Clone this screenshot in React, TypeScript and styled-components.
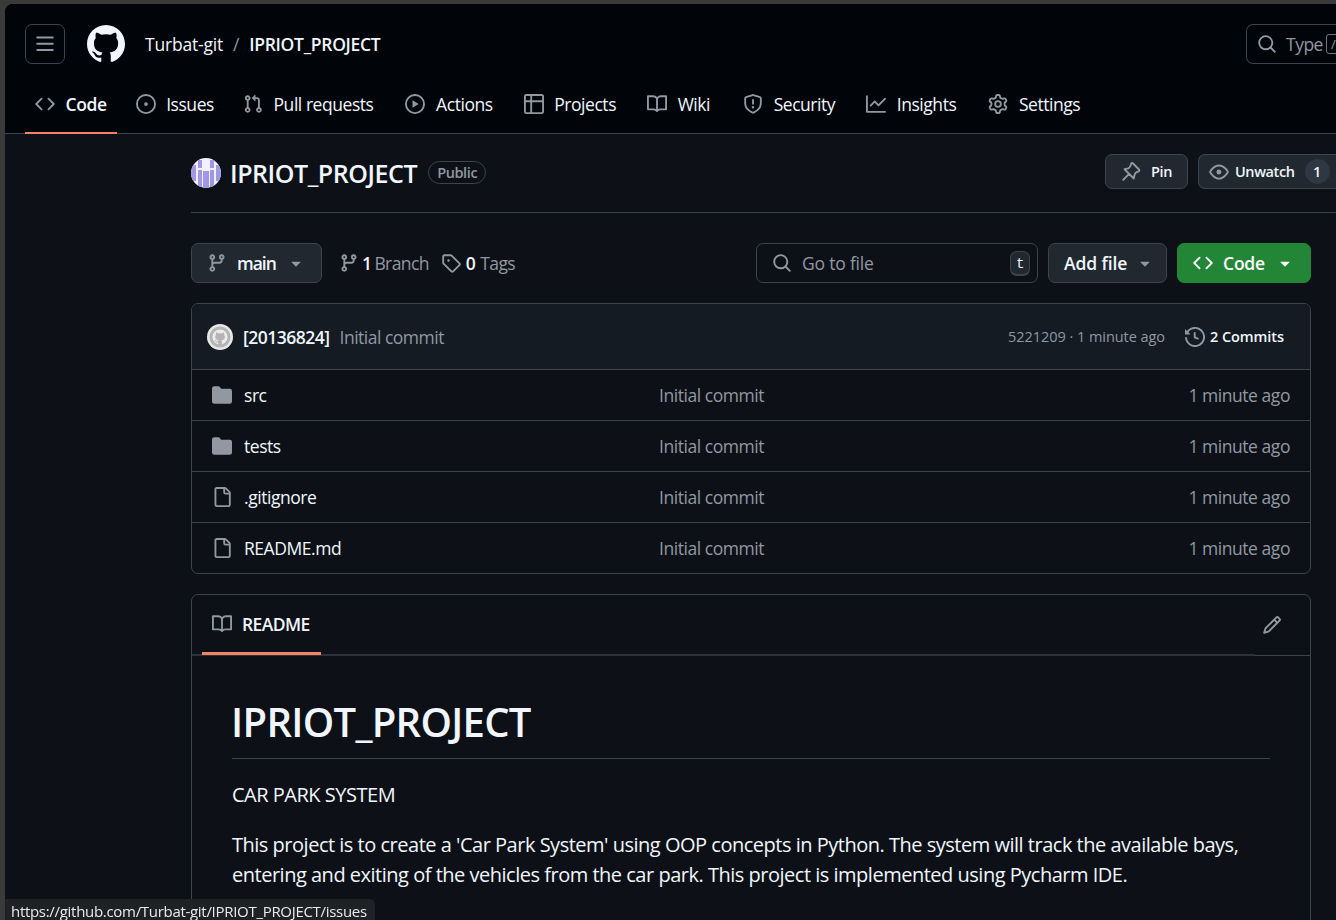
import React from "react";
import styled, { createGlobalStyle } from "styled-components";

const ICONS = {
  mark: "M8 0c4.42 0 8 3.58 8 8a8.013 8.013 0 0 1-5.45 7.59c-.4.08-.55-.17-.55-.38 0-.27.01-1.13.01-2.2 0-.75-.25-1.23-.54-1.48 1.78-.2 3.65-.88 3.65-3.95 0-.88-.31-1.59-.82-2.15.08-.2.36-1.02-.08-2.12 0 0-.67-.22-2.2.82-.64-.18-1.32-.27-2-.27-.68 0-1.36.09-2 .27-1.53-1.03-2.2-.82-2.2-.82-.44 1.1-.16 1.92-.08 2.12-.51.56-.82 1.28-.82 2.15 0 3.06 1.86 3.75 3.64 3.95-.23.2-.44.55-.51 1.07-.46.21-1.61.55-2.33-.66-.15-.24-.6-.83-1.23-.82-.67.01-.27.38.01.53.34.19.73.9.82 1.13.16.45.68 1.31 2.69.94 0 .67.01 1.3.01 1.49 0 .21-.15.45-.55.38A7.995 7.995 0 0 1 0 8c0-4.42 3.58-8 8-8Z",
  bars: "M1 2.75A.75.75 0 0 1 1.75 2h12.5a.75.75 0 0 1 0 1.5H1.75A.75.75 0 0 1 1 2.75Zm0 5A.75.75 0 0 1 1.75 7h12.5a.75.75 0 0 1 0 1.5H1.75A.75.75 0 0 1 1 7.75ZM1.75 12h12.5a.75.75 0 0 1 0 1.5H1.75a.75.75 0 0 1 0-1.5Z",
  code: "m11.28 3.22 4.25 4.25a.75.75 0 0 1 0 1.06l-4.25 4.25a.749.749 0 0 1-1.275-.326.749.749 0 0 1 .215-.734L13.94 8l-3.72-3.72a.749.749 0 0 1 .326-1.275.749.749 0 0 1 .734.215Zm-6.56 0a.751.751 0 0 1 1.042.018.751.751 0 0 1 .018 1.042L2.06 8l3.72 3.72a.749.749 0 0 1-.326 1.275.749.749 0 0 1-.734-.215L.47 8.53a.75.75 0 0 1 0-1.06Z",
  issue: "M8 9.5a1.5 1.5 0 1 0 0-3 1.5 1.5 0 0 0 0 3ZM8 0a8 8 0 1 1 0 16A8 8 0 0 1 8 0ZM1.5 8a6.5 6.5 0 1 0 13 0 6.5 6.5 0 0 0-13 0Z",
  pull: "M1.5 3.25a2.25 2.25 0 1 1 3 2.122v5.256a2.251 2.251 0 1 1-1.5 0V5.372A2.25 2.25 0 0 1 1.5 3.25Zm5.677-.177L9.573.677A.25.25 0 0 1 10 .854V2.5h1A2.5 2.5 0 0 1 13.5 5v5.628a2.251 2.251 0 1 1-1.5 0V5a1 1 0 0 0-1-1h-1v1.646a.25.25 0 0 1-.427.177L7.177 3.427a.25.25 0 0 1 0-.354ZM3.75 2.5a.75.75 0 1 0 0 1.5.75.75 0 0 0 0-1.5Zm0 9.5a.75.75 0 1 0 0 1.5.75.75 0 0 0 0-1.5Zm8.25.75a.75.75 0 1 0 1.5 0 .75.75 0 0 0-1.5 0Z",
  play: "M8 0a8 8 0 1 1 0 16A8 8 0 0 1 8 0ZM1.5 8a6.5 6.5 0 1 0 13 0 6.5 6.5 0 0 0-13 0Zm4.879-2.773 4.264 2.559a.25.25 0 0 1 0 .428l-4.264 2.559A.25.25 0 0 1 6 10.559V5.442a.25.25 0 0 1 .379-.215Z",
  table: "M0 1.75C0 .784.784 0 1.75 0h12.5C15.216 0 16 .784 16 1.75v12.5A1.75 1.75 0 0 1 14.25 16H1.75A1.75 1.75 0 0 1 0 14.25ZM6.5 6.5v8h7.75a.25.25 0 0 0 .25-.25V6.5Zm8-1.5V1.75a.25.25 0 0 0-.25-.25H6.5V5Zm-13 1.5v7.75c0 .138.112.25.25.25H5v-8ZM5 5V1.5H1.75a.25.25 0 0 0-.25.25V5Z",
  book: "M0 1.75A.75.75 0 0 1 .75 1h4.253c1.227 0 2.317.59 3 1.501A3.743 3.743 0 0 1 11.006 1h4.245a.75.75 0 0 1 .75.75v10.5a.75.75 0 0 1-.75.75h-4.507a2.25 2.25 0 0 0-1.591.659l-.622.621a.75.75 0 0 1-1.06 0l-.622-.621A2.25 2.25 0 0 0 5.258 13H.75a.75.75 0 0 1-.75-.75Zm7.251 10.324.004-5.073-.002-2.253A2.25 2.25 0 0 0 5.003 2.5H1.5v9h3.757a3.75 3.75 0 0 1 1.994.574ZM8.755 4.75l-.004 7.322a3.752 3.752 0 0 1 1.992-.572H14.5v-9h-3.495a2.25 2.25 0 0 0-2.25 2.25Z",
  shield: "M7.467.133a1.748 1.748 0 0 1 1.066 0l5.25 1.68A1.75 1.75 0 0 1 15 3.48V7c0 1.566-.32 3.182-1.303 4.682-.983 1.498-2.585 2.813-5.032 3.855a1.697 1.697 0 0 1-1.33 0c-2.447-1.042-4.049-2.357-5.032-3.855C1.32 10.182 1 8.566 1 7V3.48a1.75 1.75 0 0 1 1.217-1.667Zm.61 1.429a.25.25 0 0 0-.153 0l-5.25 1.68a.25.25 0 0 0-.174.238V7c0 1.358.275 2.666 1.057 3.86.784 1.194 2.121 2.34 4.366 3.297a.196.196 0 0 0 .154 0c2.245-.956 3.582-2.104 4.366-3.298C13.225 9.666 13.5 8.36 13.5 7V3.48a.251.251 0 0 0-.174-.237l-5.25-1.68ZM8.75 4.75v3a.75.75 0 0 1-1.5 0v-3a.75.75 0 0 1 1.5 0ZM9 10.5a1 1 0 1 1-2 0 1 1 0 0 1 2 0Z",
  graph: "M1.5 1.75V13.5h13.75a.75.75 0 0 1 0 1.5H.75a.75.75 0 0 1-.75-.75V1.75a.75.75 0 0 1 1.5 0Zm14.28 2.53-5.25 5.25a.75.75 0 0 1-1.06 0L7 7.06 4.28 9.78a.751.751 0 0 1-1.042-.018.751.751 0 0 1-.018-1.042l3.25-3.25a.75.75 0 0 1 1.06 0L10 7.94l4.72-4.72a.751.751 0 0 1 1.042.018.751.751 0 0 1 .018 1.042Z",
  gear: "M8 0a8.2 8.2 0 0 1 .701.031C9.444.095 9.99.645 10.16 1.29l.288 1.107c.018.066.079.158.212.224.231.114.454.243.668.386.123.082.233.09.299.071l1.103-.303c.644-.176 1.392.021 1.82.63.27.385.506.792.704 1.218.315.675.111 1.422-.364 1.891l-.814.806c-.049.048-.098.147-.088.294.016.257.016.515 0 .772-.01.147.038.246.088.294l.814.806c.475.469.679 1.216.364 1.891a7.977 7.977 0 0 1-.704 1.217c-.428.61-1.176.807-1.82.63l-1.102-.302c-.067-.019-.177-.011-.3.071a5.909 5.909 0 0 1-.668.386c-.133.066-.194.158-.211.224l-.29 1.106c-.168.646-.715 1.196-1.458 1.26a8.006 8.006 0 0 1-1.402 0c-.743-.064-1.289-.614-1.458-1.26l-.289-1.106c-.018-.066-.079-.158-.212-.224a5.738 5.738 0 0 1-.668-.386c-.123-.082-.233-.09-.299-.071l-1.103.303c-.644.176-1.392-.021-1.82-.63a8.12 8.12 0 0 1-.704-1.218c-.315-.675-.111-1.422.363-1.891l.815-.806c.05-.048.098-.147.088-.294a6.214 6.214 0 0 1 0-.772c.01-.147-.038-.246-.088-.294l-.815-.806C.635 6.045.431 5.298.746 4.623a7.92 7.92 0 0 1 .704-1.217c.428-.61 1.176-.807 1.82-.63l1.102.302c.067.019.177.011.3-.071.214-.143.437-.272.668-.386.133-.066.194-.158.211-.224l.29-1.106C6.009.645 6.556.095 7.299.03 7.53.01 7.764 0 8 0Zm-.571 1.525c-.036.003-.108.036-.137.146l-.289 1.105c-.147.561-.549.967-.998 1.189-.173.086-.34.183-.5.29-.417.278-.97.423-1.529.27l-1.103-.303c-.109-.03-.175.016-.195.045-.22.312-.412.644-.573.99-.014.031-.021.11.059.19l.815.806c.411.406.562.957.53 1.456a4.709 4.709 0 0 0 0 .582c.032.499-.119 1.05-.53 1.456l-.815.806c-.081.08-.073.159-.059.19.162.346.353.677.573.989.02.03.085.076.195.046l1.102-.303c.56-.153 1.113-.008 1.53.27.161.107.328.204.501.29.447.222.85.629.997 1.189l.289 1.105c.029.109.101.143.137.146a6.6 6.6 0 0 0 1.142 0c.036-.003.108-.036.137-.146l.289-1.105c.147-.561.549-.967.998-1.189.173-.086.34-.183.5-.29.417-.278.97-.423 1.529-.27l1.103.303c.109.029.175-.016.195-.045.22-.313.411-.644.573-.99.014-.031.021-.11-.059-.19l-.815-.806c-.411-.406-.562-.957-.53-1.456a4.709 4.709 0 0 0 0-.582c-.032-.499.119-1.05.53-1.456l.815-.806c.081-.08.073-.159.059-.19a6.464 6.464 0 0 0-.573-.989c-.02-.03-.085-.076-.195-.046l-1.102.303c-.56.153-1.113.008-1.53-.27a4.44 4.44 0 0 0-.501-.29c-.447-.222-.85-.629-.997-1.189l-.289-1.105c-.029-.11-.101-.143-.137-.146a6.6 6.6 0 0 0-1.142 0ZM11 8a3 3 0 1 1-6 0 3 3 0 0 1 6 0ZM9.5 8a1.5 1.5 0 1 0-3.001.001A1.5 1.5 0 0 0 9.5 8Z",
  search: "M10.68 11.74a6 6 0 0 1-7.922-8.982 6 6 0 0 1 8.982 7.922l3.04 3.04a.749.749 0 0 1-.326 1.275.749.749 0 0 1-.734-.215ZM11.5 7a4.499 4.499 0 1 0-8.997 0A4.499 4.499 0 0 0 11.5 7Z",
  eye: "M8 2c1.981 0 3.671.992 4.933 2.078 1.27 1.091 2.187 2.345 2.637 3.023a1.62 1.62 0 0 1 0 1.798c-.45.678-1.367 1.932-2.637 3.023C11.67 13.008 9.981 14 8 14c-1.981 0-3.671-.992-4.933-2.078C1.797 10.83.88 9.576.43 8.898a1.62 1.62 0 0 1 0-1.798c.45-.677 1.367-1.931 2.637-3.022C4.33 2.992 6.019 2 8 2ZM1.679 7.932a.12.12 0 0 0 0 .136c.411.622 1.241 1.75 2.366 2.717C5.176 11.758 6.527 12.5 8 12.5c1.473 0 2.825-.742 3.955-1.715 1.124-.967 1.954-2.096 2.366-2.717a.12.12 0 0 0 0-.136c-.412-.621-1.242-1.75-2.366-2.717C10.824 4.242 9.473 3.5 8 3.5c-1.473 0-2.825.742-3.955 1.715-1.124.967-1.954 2.096-2.366 2.717ZM8 10a2 2 0 1 1-.001-3.999A2 2 0 0 1 8 10Z",
  branch: "M9.5 3.25a2.25 2.25 0 1 1 3 2.122V6A2.5 2.5 0 0 1 10 8.5H6a1 1 0 0 0-1 1v1.128a2.251 2.251 0 1 1-1.5 0V5.372a2.25 2.25 0 1 1 1.5 0v1.836A2.493 2.493 0 0 1 6 7h4a1 1 0 0 0 1-1v-.628A2.25 2.25 0 0 1 9.5 3.25Zm-6 0a.75.75 0 1 0 1.5 0 .75.75 0 0 0-1.5 0Zm8.25-.75a.75.75 0 1 0 0 1.5.75.75 0 0 0 0-1.5ZM4.25 12a.75.75 0 1 0 0 1.5.75.75 0 0 0 0-1.5Z",
  tag: "M1 7.775V2.75C1 1.784 1.784 1 2.75 1h5.025c.464 0 .91.184 1.238.513l6.25 6.25a1.75 1.75 0 0 1 0 2.474l-5.026 5.026a1.75 1.75 0 0 1-2.474 0l-6.25-6.25A1.752 1.752 0 0 1 1 7.775Zm1.5 0c0 .066.026.13.073.177l6.25 6.25a.25.25 0 0 0 .354 0l5.025-5.025a.25.25 0 0 0 0-.354l-6.25-6.25a.25.25 0 0 0-.177-.073H2.75a.25.25 0 0 0-.25.25ZM6 5a1 1 0 1 1 0 2 1 1 0 0 1 0-2Z",
  history: "m.427 1.927 1.215 1.215a8.002 8.002 0 1 1-1.6 5.685.75.75 0 1 1 1.493-.154 6.5 6.5 0 1 0 1.18-4.458l1.358 1.358A.25.25 0 0 1 3.896 6H.25A.25.25 0 0 1 0 5.75V2.104a.25.25 0 0 1 .427-.177ZM7.75 4a.75.75 0 0 1 .75.75v2.992l2.028.812a.75.75 0 0 1-.557 1.392l-2.5-1A.751.751 0 0 1 7 8.25v-3.5A.75.75 0 0 1 7.75 4Z",
  file: "M2 1.75C2 .784 2.784 0 3.75 0h6.586c.464 0 .909.184 1.237.513l2.914 2.914c.329.328.513.773.513 1.237v9.586A1.75 1.75 0 0 1 13.25 16h-9.5A1.75 1.75 0 0 1 2 14.25Zm1.75-.25a.25.25 0 0 0-.25.25v12.5c0 .138.112.25.25.25h9.5a.25.25 0 0 0 .25-.25V6h-2.75A1.75 1.75 0 0 1 9 4.25V1.5Zm6.75.062V4.25c0 .138.112.25.25.25h2.688l-.011-.013-2.914-2.914-.013-.011Z",
  folder: "M1.75 1A1.75 1.75 0 0 0 0 2.75v10.5C0 14.216.784 15 1.75 15h12.5A1.75 1.75 0 0 0 16 13.25v-8.5A1.75 1.75 0 0 0 14.25 3H7.5a.25.25 0 0 1-.2-.1l-.9-1.2C6.07 1.26 5.55 1 5 1H1.75Z",
  pencil: "M11.013 1.427a1.75 1.75 0 0 1 2.474 0l1.086 1.086a1.75 1.75 0 0 1 0 2.474l-8.61 8.61c-.21.21-.47.364-.756.445l-3.251.93a.75.75 0 0 1-.927-.928l.929-3.25c.081-.286.235-.547.445-.758l8.61-8.61Zm.176 4.823L9.75 4.81l-6.286 6.287a.253.253 0 0 0-.064.108l-.558 1.953 1.953-.558a.253.253 0 0 0 .108-.064Zm1.238-3.763a.25.25 0 0 0-.354 0L10.811 3.75l1.439 1.44 1.263-1.263a.25.25 0 0 0 0-.354Z",
  caret: "m4.427 7.427 3.396 3.396a.25.25 0 0 0 .354 0l3.396-3.396A.25.25 0 0 0 11.396 7H4.604a.25.25 0 0 0-.177.427Z",
};

type IconName = keyof typeof ICONS;

const Icon = ({ name, size = 20 }: { name: IconName; size?: number }) => (
  <svg width={size} height={size} viewBox="0 0 16 16" fill="currentColor" style={{ flex: "none" }}>
    <path d={ICONS[name]} />
  </svg>
);

const PinIcon = () => (
  <svg
    width="20"
    height="20"
    viewBox="0 0 16 16"
    fill="none"
    stroke="currentColor"
    strokeWidth="1.5"
    strokeLinecap="round"
    strokeLinejoin="round"
  >
    <path d="M10 1.6 14.4 6a.9.9 0 0 1-.3 1.45l-1.5.65a3 3 0 0 0-1.7 2.1l-.7 3-7.4-7.4 3-.7a3 3 0 0 0 1.6-1.7l.65-1.5A.9.9 0 0 1 10 1.6ZM6.5 9.5 1.8 14.2" />
  </svg>
);

const Global = createGlobalStyle`
  html, body {
    margin: 0;
    height: 920px;
    overflow: hidden;
    background: #3a3a3a;
  }
  body {
    font-family: "Open Sans", "Noto Sans", sans-serif;
    color: #f0f6fc;
  }
  * { box-sizing: border-box; }
`;

const Page = styled.div`
  margin: 4px 0 0 5px;
  width: 1331px;
  height: 916px;
  overflow: hidden;
  background: #0d1117;
  border-top-left-radius: 8px;
  position: relative;
`;

const Header = styled.header`
  height: 130px;
  background: #010409;
  border-bottom: 1px solid #3d444d;
  padding: 20px 0 0 20px;
`;

const TopRow = styled.div`
  display: flex;
  align-items: center;
  height: 40px;
`;

const MenuButton = styled.div`
  width: 40px;
  height: 40px;
  border: 1px solid #3d444d;
  border-radius: 7px;
  display: flex;
  align-items: center;
  justify-content: center;
  color: #9198a1;
`;

const Logo = styled.svg`
  margin-left: 22px;
  width: 38px;
  height: 38px;
  fill: #f0f6fc;
  flex: none;
`;

const Crumbs = styled.div`
  margin-left: 20px;
  font-size: 17.5px;
  letter-spacing: -0.2px;
  display: flex;
  gap: 10px;
  flex: 1;
`;

const Slash = styled.span`
  color: #9198a1;
`;

const Strong = styled.span`
  font-weight: 600;
  letter-spacing: -0.3px;
`;

const TopSearch = styled.div`
  width: 110px;
  height: 40px;
  margin-right: -20px;
  border: 1px solid #3d444d;
  border-radius: 7px;
  border-right: none;
  display: flex;
  align-items: center;
  padding-left: 10px;
  gap: 9px;
  color: #9198a1;
  font-size: 17.5px;
  letter-spacing: -0.5px;
  flex: none;
`;

const KeyHint = styled.span`
  border: 1px solid #6e7681;
  border-radius: 3px;
  width: 14px;
  height: 20px;
  margin-left: -6px;
  font-size: 13px;
  text-indent: 4px;
`;

const Tabs = styled.nav`
  display: flex;
  gap: 11px;
  height: 50px;
  margin-top: 20px;
`;

const Tab = styled.div<{ $active?: boolean; $nudge?: number }>`
  display: flex;
  align-items: center;
  gap: 10.6px;
  padding: 0 10px 9px;
  margin-right: ${(p) => p.$nudge ?? 0}px;
  font-size: 17.5px;
  letter-spacing: -0.45px;
  font-weight: ${(p) => (p.$active ? 600 : 400)};
  border-bottom: 2.5px solid ${(p) => (p.$active ? "#f78166" : "transparent")};
  height: 50px;
  margin-bottom: -1px;
  white-space: nowrap;
  svg {
    color: #9198a1;
  }
`;

const Main = styled.main`
  margin-left: 186px;
  width: 1120px;
`;

const RepoHead = styled.div`
  width: 1147px;
  height: 79px;
  border-bottom: 1px solid #3d444d;
  display: flex;
  align-items: center;
  padding-bottom: 1px;
`;

const RepoAvatar = styled.svg`
  width: 30px;
  height: 30px;
  flex: none;
`;

const RepoName = styled.h2`
  margin: 0 0 0 9px;
  font-size: 25px;
  font-weight: 600;
  letter-spacing: -0.45px;
`;

const Badge = styled.span`
  margin-left: 11px;
  height: 23px;
  padding: 0 8px;
  border: 1px solid #3d444d;
  border-radius: 12px;
  font-size: 14.5px;
  font-weight: 600;
  line-height: 21px;
  letter-spacing: -0.4px;
  color: #9198a1;
`;

const HeadActions = styled.div`
  margin-left: auto;
  align-self: flex-start;
  margin-top: 20px;
  display: flex;
  gap: 10px;
`;

const SmallButton = styled.div`
  height: 35px;
  background: #212830;
  border: 1px solid #3d444d;
  border-radius: 7px;
  display: flex;
  align-items: center;
  font-size: 14.5px;
  font-weight: 600;
  letter-spacing: -0.4px;
  svg {
    color: #9198a1;
  }
`;

const PinButton = styled(SmallButton)`
  width: 83px;
  padding-left: 15px;
  gap: 10px;
`;

const WatchButton = styled(SmallButton)`
  width: 140px;
  padding-left: 10px;
  gap: 6px;
  border-top-right-radius: 0;
  border-bottom-right-radius: 0;
  border-right: none;
`;

const Count = styled.span`
  width: 25px;
  height: 25px;
  margin-left: 4px;
  border-radius: 50%;
  background: #2f3742;
  text-align: center;
  line-height: 25px;
`;

const Toolbar = styled.div`
  margin-top: 30px;
  height: 40px;
  display: flex;
  align-items: center;
`;

const Button = styled.div<{ $primary?: boolean }>`
  height: 40px;
  border: 1px solid ${(p) => (p.$primary ? "#238636" : "#3d444d")};
  background: ${(p) => (p.$primary ? "#238636" : "#212830")};
  border-radius: 7px;
  display: flex;
  align-items: center;
  font-size: 17.5px;
  font-weight: 600;
  letter-spacing: -0.2px;
  color: ${(p) => (p.$primary ? "#fff" : "#f0f6fc")};
  flex: none;
  svg {
    color: ${(p) => (p.$primary ? "#fff" : "#9198a1")};
  }
`;

const BranchButton = styled(Button)`
  width: 131px;
  padding-left: 15px;
  gap: 10px;
  letter-spacing: -1px;
`;

const Stat = styled.div<{ $gap: number; $inner: number }>`
  display: flex;
  align-items: center;
  gap: ${(p) => p.$inner}px;
  font-size: 17.5px;
  letter-spacing: -0.6px;
  margin-left: ${(p) => p.$gap}px;
  color: #9198a1;
  b {
    font-weight: 600;
    color: #f0f6fc;
  }
`;

const FileSearch = styled.div`
  margin-left: auto;
  width: 282px;
  height: 40px;
  border: 1px solid #3d444d;
  border-radius: 7px;
  background: #0d1117;
  display: flex;
  align-items: center;
  padding: 0 7px 0 15px;
  gap: 10px;
  color: #9198a1;
  font-size: 17.5px;
  letter-spacing: -0.2px;
`;

const ShortKey = styled.span`
  margin-left: auto;
  width: 20px;
  height: 25px;
  border: 1px solid #3d444d;
  border-bottom-width: 2px;
  border-radius: 7px;
  background: #212830;
  color: #f0f6fc;
  font-family: "Liberation Mono", monospace;
  font-size: 14px;
  text-align: center;
  line-height: 24px;
`;

const AddFile = styled(Button)`
  width: 119px;
  margin-left: 10px;
  padding-left: 15px;
  gap: 8px;
  letter-spacing: -0.1px;
`;

const CodeButton = styled(Button)`
  width: 134px;
  margin-left: 10px;
  padding-left: 15px;
  gap: 10px;
`;

const Box = styled.section<{ $top: number }>`
  margin-top: ${(p) => p.$top}px;
  border: 1px solid #3d444d;
  border-radius: 7px;
  overflow: hidden;
`;

const CommitBar = styled.div`
  height: 65px;
  background: #151b23;
  display: flex;
  align-items: center;
  padding: 0 26px 0 15px;
  font-size: 17.5px;
  letter-spacing: -0.5px;
`;

const CommitAvatar = styled.svg`
  width: 26px;
  height: 26px;
  flex: none;
`;

const Author = styled.span`
  font-weight: 600;
  margin-left: 10px;
`;

const Muted = styled.span`
  color: #9198a1;
  margin-left: 10px;
`;

const CommitMeta = styled.span`
  margin-left: auto;
  color: #9198a1;
  font-size: 14.5px;
  letter-spacing: -0.05px;
`;

const CommitCount = styled.span`
  margin-left: 20px;
  display: flex;
  align-items: center;
  gap: 5px;
  font-size: 14.5px;
  font-weight: 600;
  letter-spacing: -0.07px;
  svg {
    color: #9198a1;
  }
`;

const FileRow = styled.div`
  height: 51px;
  border-top: 1px solid #3d444d;
  display: grid;
  grid-template-columns: 447px 1fr auto;
  align-items: center;
  padding: 0 20px 1px;
  font-size: 17.5px;
  letter-spacing: -0.45px;
`;

const FileName = styled.div`
  display: flex;
  align-items: center;
  gap: 12px;
  svg {
    color: #9198a1;
  }
`;

const FileCell = styled.div`
  color: #9198a1;
`;

const ReadmeBar = styled.div`
  height: 61px;
  display: flex;
  gap: 7px;
  border-bottom: 1px solid #3d444d;
  padding-right: 28px;
`;

const TabStrip = styled.div`
  flex: 1;
  height: 61px;
  padding-left: 10px;
  box-shadow: inset 0 -2px 0 #2c323a;
`;

const ReadmeTab = styled.div`
  width: 119px;
  height: 60px;
  display: flex;
  align-items: center;
  gap: 10px;
  padding: 0 0 0 10px;
  border-bottom: 3px solid #f78166;
  font-size: 17.5px;
  font-weight: 600;
  letter-spacing: -0.6px;
  svg {
    color: #9198a1;
  }
`;

const EditIcon = styled.div`
  align-self: center;
  display: flex;
  color: #9198a1;
`;

const Article = styled.article`
  padding: 41px 40px 0;
  height: 400px;
`;

const Title = styled.h1`
  margin: 0 0 21px;
  padding-bottom: 11px;
  border-bottom: 1px solid #3d444d;
  font-size: 40px;
  font-weight: 600;
  line-height: 50px;
  letter-spacing: -0.7px;
  text-indent: -1px;
`;

const Para = styled.p`
  margin: 0 0 20px;
  font-size: 20px;
  line-height: 30px;
  letter-spacing: -0.49px;
`;

const StatusBubble = styled.div`
  position: fixed;
  left: 5px;
  bottom: 0;
  height: 21px;
  width: 370px;
  padding: 4px 0 0 6px;
  background: #202124;
  border-top-right-radius: 5px;
  color: #e8eaed;
  font-size: 15px;
  line-height: 17px;
  letter-spacing: -0.3px;
  white-space: nowrap;
`;

const tabs: { label: string; icon: IconName; active?: boolean; nudge?: number }[] = [
  { label: "Code", icon: "code", active: true, nudge: -2 },
  { label: "Issues", icon: "issue", nudge: -2 },
  { label: "Pull requests", icon: "pull", nudge: 1 },
  { label: "Actions", icon: "play" },
  { label: "Projects", icon: "table" },
  { label: "Wiki", icon: "book", nudge: 2 },
  { label: "Security", icon: "shield" },
  { label: "Insights", icon: "graph", nudge: 1 },
  { label: "Settings", icon: "gear" },
];

const files: { name: string; icon: IconName }[] = [
  { name: "src", icon: "folder" },
  { name: "tests", icon: "folder" },
  { name: ".gitignore", icon: "file" },
  { name: "README.md", icon: "file" },
];

export default function App() {
  return (
    <>
      <Global />
      <Page>
        <Header>
          <TopRow>
            <MenuButton>
              <Icon name="bars" />
            </MenuButton>
            <Logo viewBox="0 0 16 16">
              <path d={ICONS.mark} />
            </Logo>
            <Crumbs>
              <span>Turbat-git</span>
              <Slash>/</Slash>
              <Strong>IPRIOT_PROJECT</Strong>
            </Crumbs>
            <TopSearch>
              <Icon name="search" />
              Type
              <KeyHint>/</KeyHint>
            </TopSearch>
          </TopRow>
          <Tabs>
            {tabs.map((t) => (
              <Tab key={t.label} $active={t.active} $nudge={t.nudge}>
                <Icon name={t.icon} />
                {t.label}
              </Tab>
            ))}
          </Tabs>
        </Header>
        <Main>
          <RepoHead>
            <RepoAvatar viewBox="0 0 30 30">
              <defs>
                <clipPath id="repo-avatar">
                  <circle cx="15" cy="15" r="15" />
                </clipPath>
              </defs>
              <g clipPath="url(#repo-avatar)">
                <rect width="30" height="30" fill="#f1f0fb" />
                <rect x="0" y="7" width="5" height="16" fill="#a297e6" />
                <rect x="25" y="7" width="5" height="16" fill="#a297e6" />
                <rect x="7" y="2" width="4" height="8" fill="#a297e6" />
                <rect x="19" y="2" width="4" height="8" fill="#a297e6" />
                <rect x="7" y="12" width="4" height="17" fill="#a297e6" />
                <rect x="19" y="12" width="4" height="17" fill="#a297e6" />
                <rect x="12" y="13" width="6" height="17" fill="#a297e6" />
              </g>
            </RepoAvatar>
            <RepoName>IPRIOT_PROJECT</RepoName>
            <Badge>Public</Badge>
            <HeadActions>
              <PinButton>
                <PinIcon />
                Pin
              </PinButton>
              <WatchButton>
                <Icon name="eye" />
                Unwatch
                <Count>1</Count>
              </WatchButton>
            </HeadActions>
          </RepoHead>
          <Toolbar>
            <BranchButton>
              <Icon name="branch" />
              main
              <Icon name="caret" />
            </BranchButton>
            <Stat $gap={17} $inner={3}>
              <Icon name="branch" />
              <b>1</b> Branch
            </Stat>
            <Stat $gap={12} $inner={5}>
              <Icon name="tag" />
              <b>0</b> Tags
            </Stat>
            <FileSearch>
              <Icon name="search" />
              Go to file
              <ShortKey>t</ShortKey>
            </FileSearch>
            <AddFile>
              Add file
              <Icon name="caret" />
            </AddFile>
            <CodeButton $primary>
              <Icon name="code" />
              Code
              <Icon name="caret" />
            </CodeButton>
          </Toolbar>
          <Box $top={20}>
            <CommitBar>
              <CommitAvatar viewBox="0 0 26 26">
                <circle cx="13" cy="13" r="13" fill="#e8e8e8" />
                <circle cx="13" cy="13" r="10.5" fill="#b4b4b4" />
                <g transform="translate(5.5 5.5) scale(0.94)">
                  <path d={ICONS.mark} fill="#ececec" />
                </g>
              </CommitAvatar>
              <Author>[20136824]</Author>
              <Muted>Initial commit</Muted>
              <CommitMeta>5221209 · 1 minute ago</CommitMeta>
              <CommitCount>
                <Icon name="history" />
                2 Commits
              </CommitCount>
            </CommitBar>
            {files.map((f) => (
              <FileRow key={f.name}>
                <FileName>
                  <Icon name={f.icon} />
                  {f.name}
                </FileName>
                <FileCell>Initial commit</FileCell>
                <FileCell>1 minute ago</FileCell>
              </FileRow>
            ))}
          </Box>
          <Box $top={20}>
            <ReadmeBar>
              <TabStrip>
                <ReadmeTab>
                  <Icon name="book" />
                  README
                </ReadmeTab>
              </TabStrip>
              <EditIcon>
                <Icon name="pencil" />
              </EditIcon>
            </ReadmeBar>
            <Article>
              <Title>IPRIOT_PROJECT</Title>
              <Para>CAR PARK SYSTEM</Para>
              <Para>
                This project is to create a 'Car Park System' using OOP concepts in Python. The
                system will track the available bays, entering and exiting of the vehicles from the
                car park. This project is implemented using Pycharm IDE.
              </Para>
            </Article>
          </Box>
        </Main>
        <StatusBubble>https://github.com/Turbat-git/IPRIOT_PROJECT/issues</StatusBubble>
      </Page>
    </>
  );
}
